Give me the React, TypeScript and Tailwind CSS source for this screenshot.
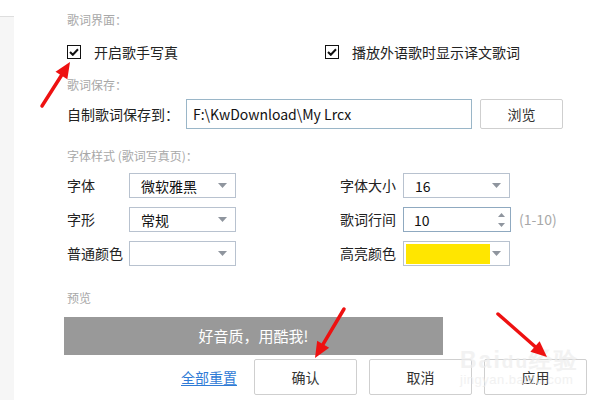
import React from 'react'

const FONT = { fontFamily: '"Noto Sans CJK SC", "Liberation Sans", sans-serif' }

function Caret() {
  return (
    <svg width="9" height="5" viewBox="0 0 9 5" className="shrink-0">
      <path d="M0 0h9L4.5 5z" fill="#8f959e" />
    </svg>
  )
}

function Select({ value, width = 'w-[107px]' }: { value?: string; width?: string }) {
  return (
    <div className={`${width} h-[25px] border border-[#b8c2cf] bg-white flex items-center pl-[11px] pr-[8px]`}>
      <span className="flex-1 text-[14px] text-[#111] leading-none">{value}</span>
      <Caret />
    </div>
  )
}

function Check({ label }: { label: string }) {
  return (
    <div className="flex items-center gap-[13px]">
      <div className="w-[14px] h-[14px] border-[1.5px] border-[#111] flex items-center justify-center">
        <svg width="10" height="8" viewBox="0 0 10 8">
          <path d="M1 4l2.8 2.8L9 1.2" stroke="#111" strokeWidth="2" fill="none" />
        </svg>
      </div>
      <span className="text-[14px] text-[#222]">{label}</span>
    </div>
  )
}

function Arrow({ x1, y1, x2, y2 }: { x1: number; y1: number; x2: number; y2: number }) {
  const a = Math.atan2(y2 - y1, x2 - x1)
  const len = 16
  const w = 7
  const bx = x2 - Math.cos(a) * len
  const by = y2 - Math.sin(a) * len
  const px = -Math.sin(a) * w
  const py = Math.cos(a) * w
  return (
    <g>
      <line x1={x1} y1={y1} x2={bx} y2={by} stroke="#ee1111" strokeWidth="3.5" strokeLinecap="round" />
      <polygon points={`${x2},${y2} ${bx + px},${by + py} ${bx - px},${by - py}`} fill="#ee1111" />
    </g>
  )
}

export default function App() {
  return (
    <div className="relative w-[600px] h-[400px] bg-white flex overflow-hidden" style={FONT}>
      <div className="w-[14px] mt-[16px] border-t border-[#dedede] bg-[#f6f6f6]" />

      <div className="flex-1 pl-[53px] flex flex-col">
        <div className="mt-[11px] h-[18px] leading-[18px] text-[12px] text-[#a8a8a8]">歌词界面：</div>

        <div className="mt-[13px] h-[20px] flex items-center">
          <div className="w-[258px]">
            <Check label="开启歌手写真" />
          </div>
          <Check label="播放外语歌时显示译文歌词" />
        </div>

        <div className="mt-[14px] h-[18px] leading-[18px] text-[12px] text-[#a8a8a8]">歌词保存：</div>

        <div className="mt-[5px] h-[30px] flex items-center">
          <span className="w-[119px] text-[14px] text-[#222]">自制歌词保存到：</span>
          <div className="w-[286px] h-[30px] border border-[#9ab6c8] flex items-center pl-[6px] text-[14px] text-[#111]">
            F:\KwDownload\My Lrcx
          </div>
          <button className="ml-[8px] w-[83px] h-[30px] border border-[#cfcfcf] rounded-[2px] bg-white text-[14px] text-[#333]">
            浏览
          </button>
        </div>

        <div className="mt-[18px] h-[18px] leading-[18px] text-[12px] text-[#a8a8a8]">字体样式 (歌词写真页)：</div>

        <div className="mt-[8px] flex flex-col gap-[9px]">
          <div className="h-[25px] flex items-center">
            <span className="w-[62px] text-[14px] text-[#222]">字体</span>
            <Select value="微软雅黑" />
            <span className="ml-[104px] w-[63px] text-[14px] text-[#222]">字体大小</span>
            <Select value="16" />
          </div>
          <div className="h-[25px] flex items-center">
            <span className="w-[62px] text-[14px] text-[#222]">字形</span>
            <Select value="常规" />
            <span className="ml-[104px] w-[63px] text-[14px] text-[#222]">歌词行间</span>
            <div className="w-[108px] h-[25px] border border-[#8fa9c0] bg-white flex items-center pl-[10px] pr-[5px]">
              <span className="flex-1 text-[14px] text-[#111] leading-none">10</span>
              <div className="flex flex-col gap-[6px]">
                <svg width="7" height="4" viewBox="0 0 7 4"><path d="M0 4h7L3.5 0z" fill="#8f959e" /></svg>
                <svg width="7" height="4" viewBox="0 0 7 4"><path d="M0 0h7L3.5 4z" fill="#8f959e" /></svg>
              </div>
            </div>
            <span className="ml-[8px] text-[14px] text-[#a8a8a8]">(1-10)</span>
          </div>
          <div className="h-[25px] flex items-center">
            <span className="w-[62px] text-[14px] text-[#222]">普通颜色</span>
            <Select />
            <span className="ml-[104px] w-[63px] text-[14px] text-[#222]">高亮颜色</span>
            <div className="w-[107px] h-[25px] border border-[#b8c2cf] bg-white flex items-center pl-[2px] pr-[8px]">
              <div className="w-[84px] h-[20px] bg-[#ffe600]" />
              <div className="flex-1" />
              <Caret />
            </div>
          </div>
        </div>

        <div className="mt-[23px] h-[18px] leading-[18px] text-[12px] text-[#a8a8a8]">预览</div>

        <div className="mt-[10px] -ml-[3px] w-[379px] h-[38px] bg-[#999999] flex items-center justify-center text-[15px] text-white">
          好音质，用酷我!
        </div>

        <div className="mt-[4px] h-[36px] flex items-center">
          <span className="ml-[114px] text-[14px] text-[#2f7bd6] underline underline-offset-2">全部重置</span>
          <div className="ml-[17px] flex gap-[12px]">
            {['确认', '取消', '应用'].map((t) => (
              <button key={t} className="w-[103px] h-[36px] border border-[#cfcfcf] rounded-[2px] bg-white text-[14px] text-[#333]">
                {t}
              </button>
            ))}
          </div>
        </div>
      </div>

      <div className="absolute left-[460px] top-[349px] flex flex-col items-start pointer-events-none whitespace-nowrap opacity-70" style={{ fontFamily: '"Liberation Sans", sans-serif' }}>
        <span className="text-[23px] font-bold leading-[23px] tracking-[2px] text-[#ededed]">
          Bai<span className="text-[19px]">du</span>经验
        </span>
        <span className="text-[13px] leading-[14px] tracking-[0.5px] text-[#ececec]">jingyan.baidu.com</span>
      </div>

      <svg className="absolute inset-0 pointer-events-none" width="600" height="400">
        <Arrow x1={42} y1={106} x2={70} y2={62} />
        <Arrow x1={344} y1={309} x2={315} y2={358} />
        <Arrow x1={498} y1={314} x2={547} y2={357} />
      </svg>
    </div>
  )
}
